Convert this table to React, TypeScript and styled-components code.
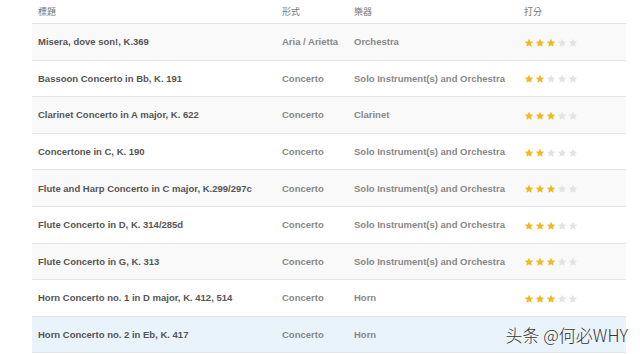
import React from "react";
import styled, { createGlobalStyle } from "styled-components";

interface Work {
  title: string;
  form: string;
  instrument: string;
  rating: number;
}

const works: Work[] = [
  { title: "Misera, dove son!, K.369", form: "Aria / Arietta", instrument: "Orchestra", rating: 3 },
  { title: "Bassoon Concerto in Bb, K. 191", form: "Concerto", instrument: "Solo Instrument(s) and Orchestra", rating: 2 },
  { title: "Clarinet Concerto in A major, K. 622", form: "Concerto", instrument: "Clarinet", rating: 3 },
  { title: "Concertone in C, K. 190", form: "Concerto", instrument: "Solo Instrument(s) and Orchestra", rating: 2 },
  { title: "Flute and Harp Concerto in C major, K.299/297c", form: "Concerto", instrument: "Solo Instrument(s) and Orchestra", rating: 3 },
  { title: "Flute Concerto in D, K. 314/285d", form: "Concerto", instrument: "Solo Instrument(s) and Orchestra", rating: 3 },
  { title: "Flute Concerto in G, K. 313", form: "Concerto", instrument: "Solo Instrument(s) and Orchestra", rating: 3 },
  { title: "Horn Concerto no. 1 in D major, K. 412, 514", form: "Concerto", instrument: "Horn", rating: 3 },
  { title: "Horn Concerto no. 2 in Eb, K. 417", form: "Concerto", instrument: "Horn", rating: 0 },
];

const Star = ({ on }: { on: boolean }) => (
  <svg width="10" height="10" viewBox="0 0 24 24">
    <path
      d="M12 1.5l3.1 6.6 7.2.9-5.3 5 1.4 7.1L12 17.6l-6.4 3.5 1.4-7.1-5.3-5 7.2-.9z"
      fill={on ? "#f2b824" : "#e3e3e3"}
    />
  </svg>
);

export default () => (
  <>
    <GlobalStyle />
    <Page>
      <Table>
        <HeadRow>
          <HeadCell>標題</HeadCell>
          <HeadCell>形式</HeadCell>
          <HeadCell>樂器</HeadCell>
          <HeadCell>打分</HeadCell>
        </HeadRow>
        {works.map((w, i) => (
          <Row key={w.title} $striped={i % 2 === 0} $hover={i === works.length - 1}>
            <TitleCell>{w.title}</TitleCell>
            <Cell>{w.form}</Cell>
            <Cell>{w.instrument}</Cell>
            <Cell>
              {w.rating > 0 && (
                <Stars>
                  {[0, 1, 2, 3, 4].map((s) => (
                    <Star key={s} on={s < w.rating} />
                  ))}
                </Stars>
              )}
            </Cell>
          </Row>
        ))}
        <Watermark>头条 @何必WHY</Watermark>
      </Table>
    </Page>
  </>
);

const GlobalStyle = createGlobalStyle`
  body {
    margin: 0;
    background: #fff;
    font-family: "Liberation Sans", Arial, "Noto Sans CJK SC", sans-serif;
  }
`;

const Page = styled.div`
  width: 640px;
  height: 354px;
  overflow: hidden;
  padding-left: 32px;
  box-sizing: border-box;
`;

const Table = styled.div`
  position: relative;
  width: 594px;
`;

const grid = `
  display: grid;
  grid-template-columns: 244px 72px 170px 108px;
  align-items: center;
`;

const HeadRow = styled.div`
  ${grid}
  height: 24px;
  border-bottom: 1px solid #e4e4e4;
  box-sizing: border-box;
`;

const HeadCell = styled.div`
  padding: 0 6px;
  font-family: "Noto Sans CJK TC", "Noto Sans CJK SC", sans-serif;
  font-size: 9px;
  color: #777;
`;

const Row = styled.div<{ $striped: boolean; $hover: boolean }>`
  ${grid}
  height: 36.6px;
  box-sizing: border-box;
  border-bottom: 1px solid #e4e4e4;
  background: ${(p) => (p.$hover ? "#e8f3fb" : p.$striped ? "#f9f9f9" : "#fff")};
`;

const Cell = styled.div`
  padding: 0 6px;
  font-size: 9.5px;
  font-weight: bold;
  color: #888;
  white-space: nowrap;
`;

const TitleCell = styled(Cell)`
  color: #555;
`;

const Stars = styled.div`
  display: flex;
  gap: 1px;
  padding-top: 2px;
`;

const Watermark = styled.div`
  position: absolute;
  right: -2px;
  bottom: 6px;
  font-family: "Noto Sans CJK SC", sans-serif;
  font-weight: 300;
  font-size: 17px;
  color: #333;
  text-shadow: 0 0 2px #fff;
`;
